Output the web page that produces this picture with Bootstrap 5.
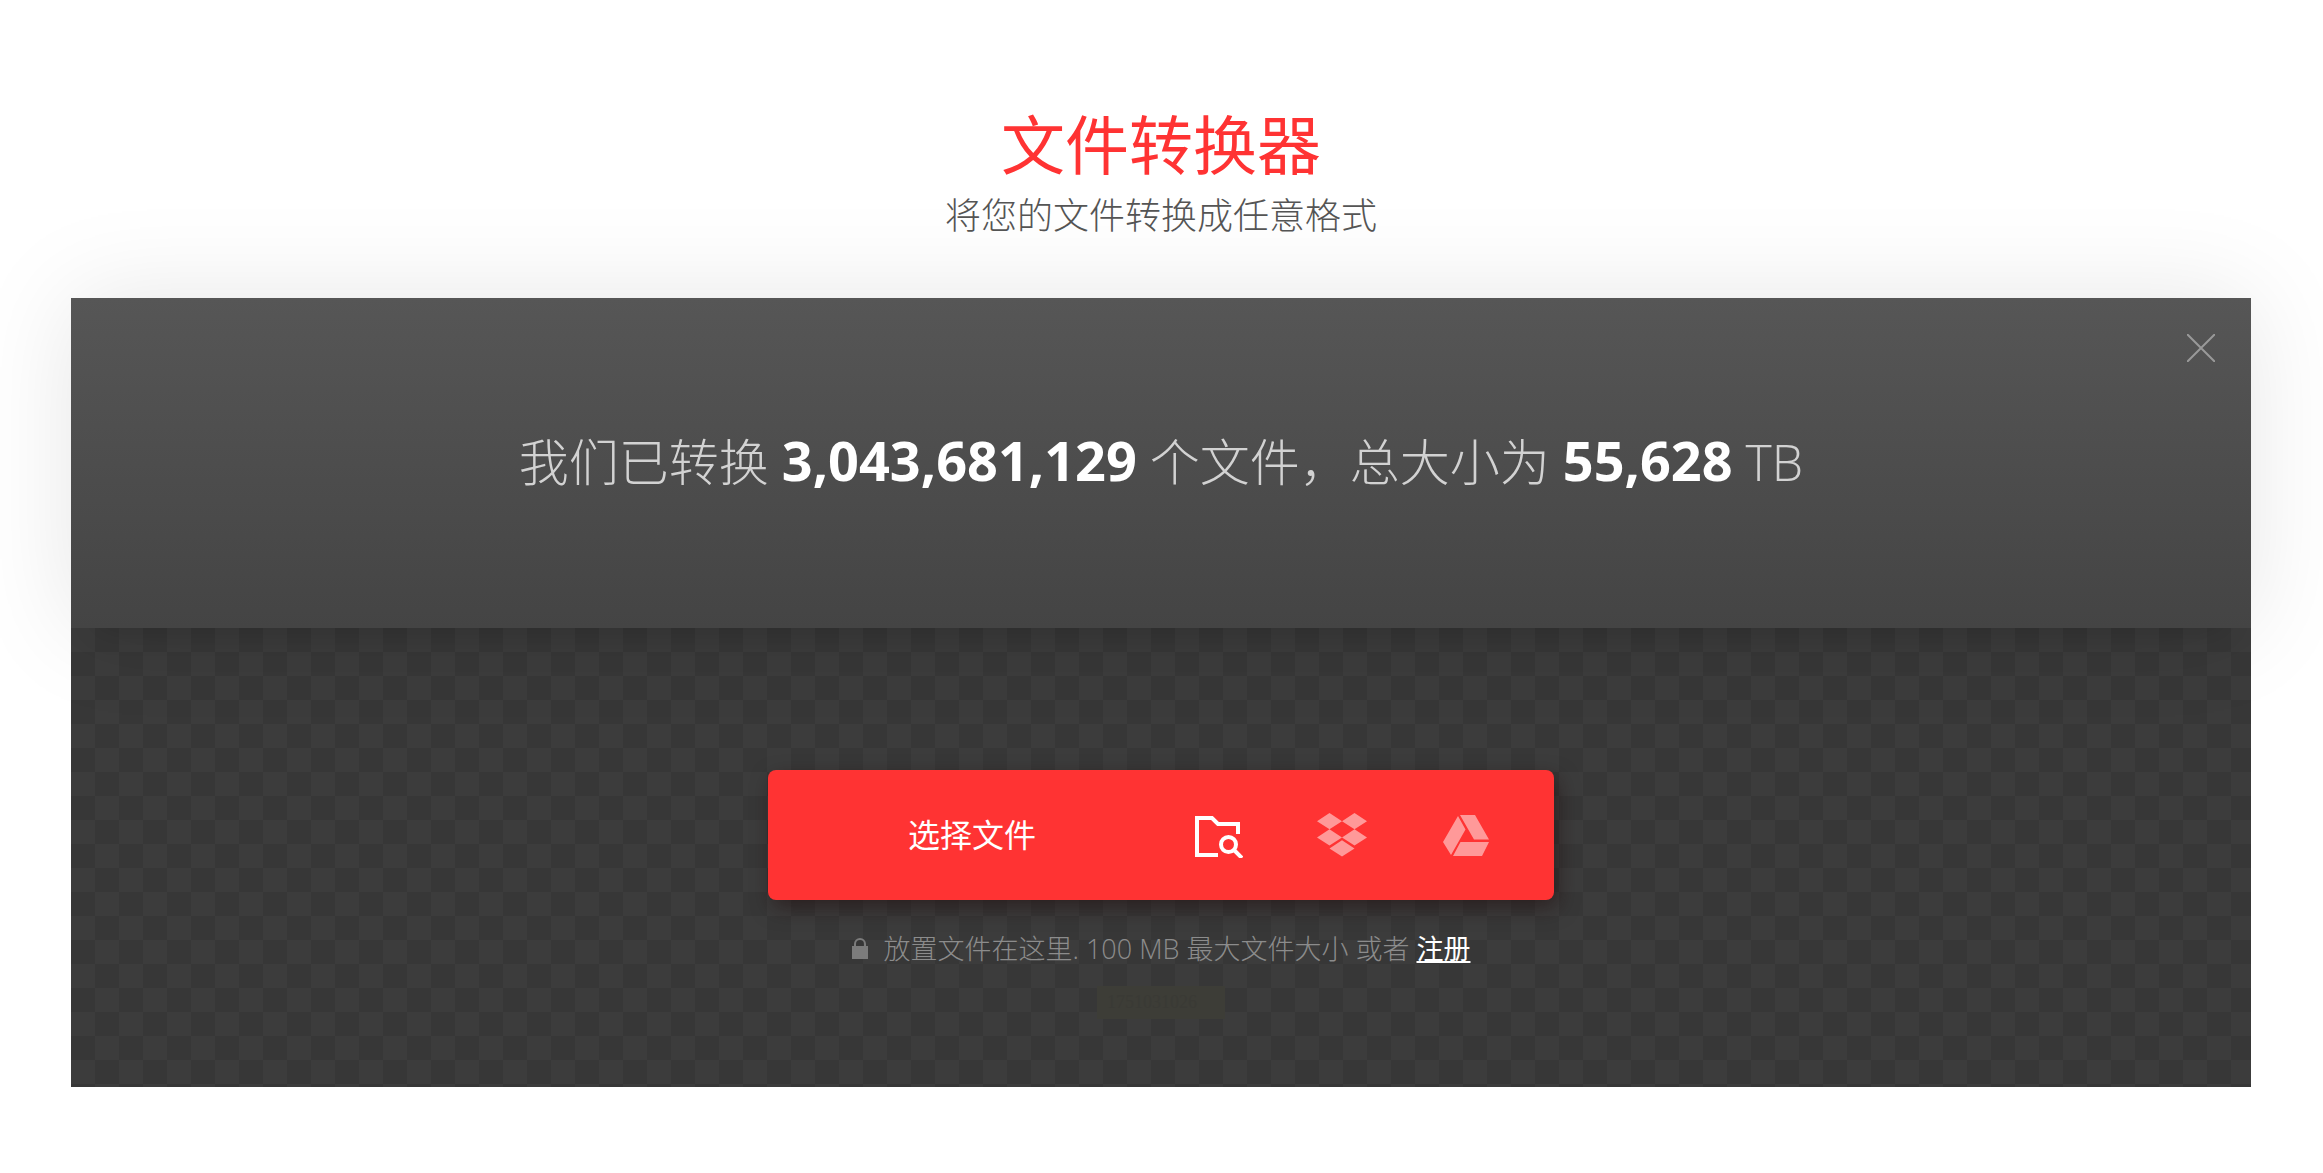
<!DOCTYPE html>
<html lang="zh-CN">
<head>
<meta charset="utf-8">
<meta name="viewport" content="width=device-width, initial-scale=1">
<title>文件转换器</title>
<link rel="stylesheet" href="https://cdn.jsdelivr.net/npm/bootstrap@5.3.0/dist/css/bootstrap.min.css">
<style>
body { font-family: "Open Sans", "Noto Sans CJK SC", sans-serif; background: #fff; overflow-x: hidden; }
.converter { padding: 105px 72px 80px 71px; }
.converter-title { font-size: 64px; line-height: 72px; color: #f33; font-family: "Noto Sans CJK SC", sans-serif; }
.converter-lead { font-size: 36px; line-height: 78px; margin-bottom: 43px; color: #555; }
.stats { height: 330px; padding-bottom: 2px; background: linear-gradient(#565656, #444); box-shadow: 0 0 96px rgba(0,0,0,.1), 0 28px 28px -28px rgba(0,0,0,.16); z-index: 1; }
.stats-text { font-size: 50px; line-height: 72px; color: #d2d2d2; }
.stats-text strong { font-size: 54px; font-weight: 700; line-height: 1; color: #fff; }
.close-btn { top: 24px; right: 24px; width: 52px; height: 52px; color: #999; }
.drop-area { padding: 142px 24px 68px; background: repeating-conic-gradient(#373737 0 25%, #3c3c3c 0 50%) 0 0 / 48px 48px; }
.picker { width: 786px; max-width: 100%; height: 130px; padding: 0 26px 0 20px; border-radius: 8px; background: #f33; box-shadow: 4px 8px 20px rgba(30,10,10,.5); }
.picker button { color: #fff; border-radius: 0; }
.pick-main { font-size: 32px; }
.pick-source { width: 124px; }
.pick-faded { opacity: .5; }
.drop-note { margin-top: 29px; font-size: 27px; line-height: 40px; color: #8c8c8c; }
.drop-note svg { vertical-align: baseline; color: #7c7c7c; }
.drop-note a { color: #fff; font-weight: 400; text-underline-offset: 2px; }
.build-tag { margin-top: 17px; width: 128px; height: 33px; padding-left: 10px; background: #3d3d37; color: #3a3a35; font: 18px/33px "Liberation Serif", serif; }
</style>
</head>
<body>
<main class="converter">
  <header class="text-center">
    <h1 class="converter-title fw-normal mb-0">文件转换器</h1>
    <p class="converter-lead fw-light">将您的文件转换成任意格式</p>
  </header>
  <section>
    <div class="stats position-relative d-flex align-items-center justify-content-center text-center">
      <p class="stats-text fw-light mb-0">我们已转换 <strong>3,043,681,129</strong> 个文件，总大小为 <strong>55,628</strong> TB</p>
      <button type="button" class="close-btn btn border-0 p-0 position-absolute d-flex align-items-center justify-content-center" aria-label="关闭">
        <svg width="28" height="28" viewBox="0 0 28 28" fill="none" stroke="currentColor" stroke-width="2"><path d="M0 0 28 28M28 0 0 28"/></svg>
      </button>
    </div>
    <div class="drop-area d-flex flex-column align-items-center">
      <div class="picker d-flex align-items-stretch">
        <button type="button" class="pick-main btn border-0 p-0 flex-grow-1">选择文件</button>
        <button type="button" class="pick-source btn border-0 p-0 d-flex align-items-center justify-content-center" aria-label="浏览文件夹">
          <svg width="50" height="46" viewBox="0 0 50 46" fill="none" stroke="currentColor" stroke-width="4"><path d="M25 43H4V6H19L25 12H45V22"/><circle cx="35.500" cy="32.500" r="7.500"/><path d="M41 38 49 46"/></svg>
        </button>
        <button type="button" class="pick-source btn border-0 p-0 d-flex align-items-center justify-content-center" aria-label="Dropbox">
          <svg class="pick-faded" width="50" height="44" viewBox="0 0 50 44" fill="currentColor"><path d="M12.500 0 25 8.200 12.500 16.300 0 8.200ZM37.500 0 50 8.200 37.500 16.300 25 8.200ZM12.500 16.300 25 24.500 12.500 32.600 0 24.500ZM37.500 16.300 50 24.500 37.500 32.600 25 24.500ZM25 27.200 37.500 35.400 25 43.500 12.500 35.400Z"/></svg>
        </button>
        <button type="button" class="pick-source btn border-0 p-0 d-flex align-items-center justify-content-center" aria-label="Google Drive">
          <svg class="pick-faded" width="46" height="41" viewBox="0 0 46 41" fill="currentColor"><path d="M15 1 22.500 14.500 8 40 0 27ZM17 0H32L46 24.500H31ZM17.500 27H46L39 41H10Z"/></svg>
        </button>
      </div>
      <p class="drop-note fw-light mb-0 text-center">
        <svg class="me-3" width="16" height="21" viewBox="0 0 16 21" aria-hidden="true"><path d="M0 8H16V21H0Z" fill="currentColor"/><path d="M3 9V6a5 5 0 0 1 10 0v3" fill="none" stroke="currentColor" stroke-width="2"/></svg>放置文件在这里. 100 MB 最大文件大小 或者 <a href="#">注册</a>
      </p>
      <div class="build-tag">1751031026</div>
    </div>
  </section>
</main>
<script src="https://cdn.jsdelivr.net/npm/bootstrap@5.3.0/dist/js/bootstrap.bundle.min.js"></script>
</body>
</html>
